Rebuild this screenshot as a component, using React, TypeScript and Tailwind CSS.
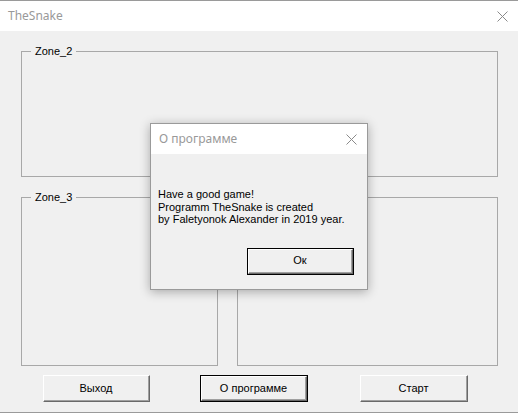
import React from "react";

const font = { fontFamily: '"Liberation Sans", Arial, sans-serif' };
const titleFont = { fontFamily: '"Noto Sans", "Open Sans", sans-serif' };

function CloseX({ className = "" }: { className?: string }) {
  return (
    <svg width="11" height="11" viewBox="0 0 11 11" className={className}>
      <path d="M0.5 0.5 L10.5 10.5 M10.5 0.5 L0.5 10.5" stroke="#8a8a8a" strokeWidth="1" fill="none" />
    </svg>
  );
}

function WinButton({ label, def = false, w }: { label: string; def?: boolean; w: string }) {
  return (
    <div className={`${w} h-[27px] ${def ? "border border-black" : ""} bg-[#f0f0f0]`}>
      <div className="w-full h-full border-t border-l border-white border-r border-b border-r-[#696969] border-b-[#696969]">
        <div className="w-full h-full border-r border-b border-r-[#a0a0a0] border-b-[#a0a0a0] flex items-center justify-center text-[11px] text-black" style={font}>
          {label}
        </div>
      </div>
    </div>
  );
}

function Group({ label, className }: { label: string; className: string }) {
  return (
    <div className={`relative border border-[#a8a8a8] ${className}`}>
      <div className="absolute -top-[8px] left-[9px] px-[4px] bg-[#f0f0f0] text-[11px] leading-[14px] text-black" style={font}>
        {label}
      </div>
    </div>
  );
}

export default function App() {
  return (
    <div className="relative w-[518px] h-[413px] bg-[#f0f0f0] overflow-hidden">
      <div className="h-[31px] bg-white border-t border-[#9a9a9a] flex items-center justify-between pl-[8px] pr-[10px]">
        <span className="text-[12px] text-[#999999]" style={titleFont}>TheSnake</span>
        <CloseX />
      </div>
      <div className="flex flex-col pl-[21px] pr-[20px] pt-[20px]">
        <Group label="Zone_2" className="w-[477px] h-[126px]" />
        <div className="flex gap-[19px] mt-[20px]">
          <Group label="Zone_3" className="w-[197px] h-[169px]" />
          <Group label="" className="w-[261px] h-[169px]" />
        </div>
        <div className="flex mt-[9px] pl-[22px]">
          <WinButton label="Выход" w="w-[107px]" />
          <div className="ml-[50px]"><WinButton label="О программе" def w="w-[108px]" /></div>
          <div className="ml-[52px]"><WinButton label="Старт" w="w-[108px]" /></div>
        </div>
      </div>
      <div className="absolute left-0 right-0 bottom-0 h-[1px] bg-[#9a9a9a]" />

      <div className="absolute left-[150px] top-[123px] w-[218px] h-[167px] border border-[#9a9a9a] bg-[#f0f0f0] shadow-[0_2px_10px_rgba(0,0,0,0.3)] flex flex-col">
        <div className="h-[30px] bg-white flex items-center justify-between pl-[8px] pr-[10px]">
          <span className="text-[12px] text-[#999999]" style={titleFont}>О программе</span>
          <CloseX />
        </div>
        <div className="pl-[7px] pt-[34px] text-[11px] leading-[12.5px] text-black" style={font}>
          <div>Have a good game!</div>
          <div>Programm TheSnake is created</div>
          <div>by Faletyonok Alexander in 2019 year.</div>
        </div>
        <div className="pl-[96px] mt-[22px]">
          <WinButton label="Ок" def w="w-[107px]" />
        </div>
      </div>
    </div>
  );
}
